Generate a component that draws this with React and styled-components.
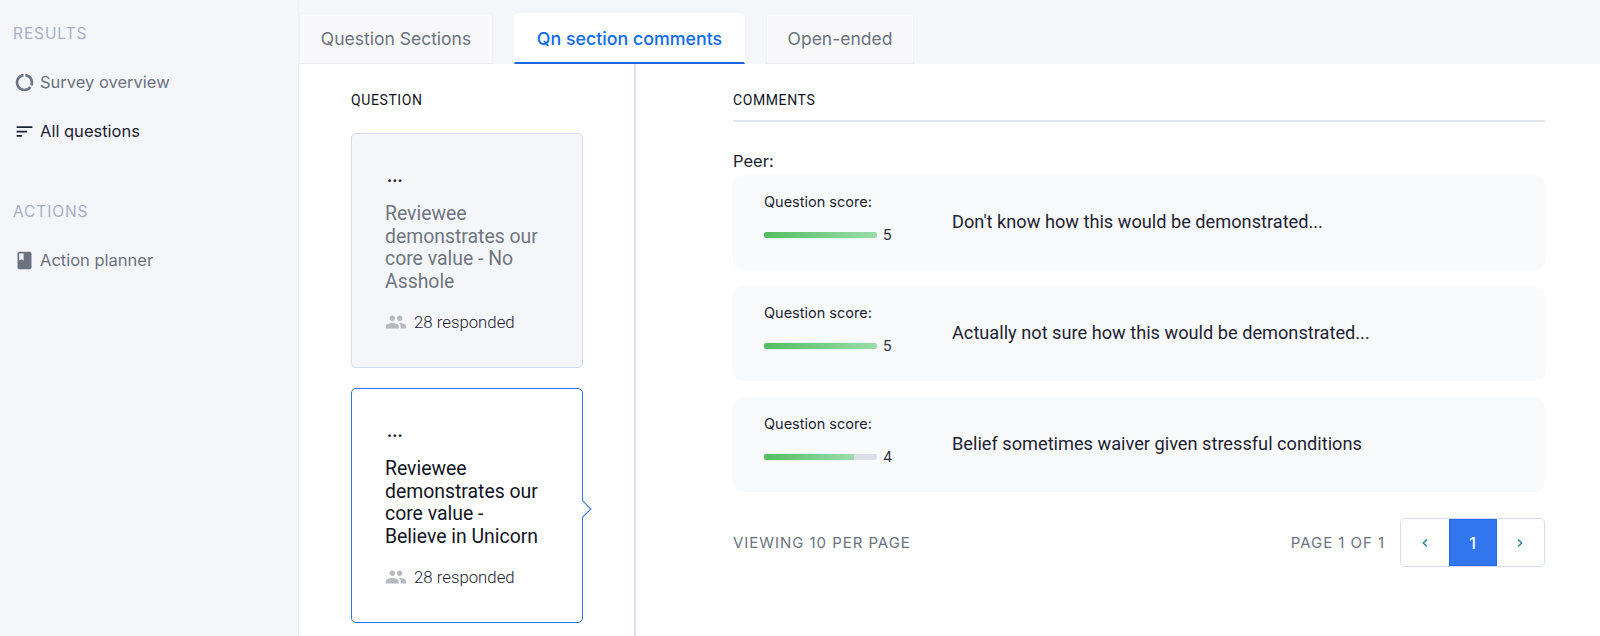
import React from 'react';
import styled, { createGlobalStyle } from 'styled-components';
import { MdDataUsage, MdSort, MdBook, MdPeople, MdChevronLeft, MdChevronRight } from 'react-icons/md';

const GlobalStyle = createGlobalStyle`
  html, body {
    margin: 0;
    padding: 0;
    height: 636px;
    overflow: hidden;
    background: #f5f6fa;
    font-family: Inter, 'Liberation Sans', sans-serif;
  }
`;

const Page = styled.div`
  display: flex;
  width: 1600px;
  height: 636px;
  overflow: hidden;
`;

const Sidebar = styled.aside`
  width: 299px;
  flex: none;
  padding-top: 24px;
  box-sizing: border-box;
  border-right: 1px solid #eff0f4;
`;

const SideHeading = styled.div`
  margin: ${({ $top }) => $top || 0}px 0 0 13px;
  height: 18px;
  line-height: 19px;
  font-size: 15.5px;
  letter-spacing: 0.9px;
  color: #a9b0ca;
`;

const SideItem = styled.div`
  display: flex;
  align-items: center;
  height: 24px;
  margin: ${({ $top }) => $top}px 0 0 13.5px;
  gap: 5.5px;
  font-size: 16.5px;
  color: ${({ $active }) => ($active ? '#1d2233' : '#6b7280')};
  svg {
    width: 21px;
    height: 21px;
    flex: none;
  }
`;

const Main = styled.main`
  flex: 1;
  display: flex;
  flex-direction: column;
  min-width: 0;
`;

const TabBar = styled.div`
  display: flex;
  gap: 21px;
  height: 64px;
  padding-top: 13px;
  box-sizing: border-box;
`;

const Tab = styled.div`
  width: ${({ $w }) => $w}px;
  height: 51px;
  box-sizing: border-box;
  display: flex;
  align-items: center;
  justify-content: center;
  border-radius: 5px 5px 0 0;
  font-size: ${({ $active }) => ($active ? 17.8 : 17.5)}px;
  font-weight: ${({ $active }) => ($active ? 500 : 400)};
  color: ${({ $active }) => ($active ? '#0f6be8' : '#6b7280')};
  background: ${({ $active }) => ($active ? '#fff' : '#f9f9fb')};
  border: 1px solid ${({ $active }) => ($active ? '#fff' : '#f1f2f5')};
  border-bottom: ${({ $active }) => ($active ? '2px solid #1a66e0' : '1px solid #eceef3')};
`;

const Content = styled.div`
  flex: 1;
  display: flex;
  background: #fff;
  min-height: 0;
`;

const QuestionColumn = styled.section`
  width: 337px;
  flex: none;
  box-sizing: border-box;
  padding: 28px 0 0 52px;
  border-right: 2px solid #dbe0f4;
`;

const ColumnHeading = styled.div`
  height: 16px;
  line-height: 16px;
  font-family: Roboto, sans-serif;
  font-size: 14px;
  letter-spacing: 0.6px;
  color: #11141f;
`;

const Card = styled.div`
  position: relative;
  width: 232px;
  height: 235px;
  box-sizing: border-box;
  margin-top: ${({ $top }) => $top}px;
  padding: 33px 0 0 33px;
  border-radius: 5px;
  font-family: Roboto, sans-serif;
  background: ${({ $selected }) => ($selected ? '#fff' : '#f5f6fa')};
  border: 1px solid ${({ $selected }) => ($selected ? '#2f74ec' : '#d3daf3')};
  ${({ $selected }) =>
    $selected &&
    `&::after {
      content: '';
      position: absolute;
      right: -7px;
      top: 114px;
      width: 12px;
      height: 12px;
      box-sizing: border-box;
      background: #fff;
      border-top: 1px solid #2f74ec;
      border-right: 1px solid #2f74ec;
      transform: rotate(45deg);
    }`}
`;

const Dots = styled.div`
  height: 22px;
  margin-left: 2px;
  line-height: 17px;
  font-size: 18px;
  font-weight: 700;
  color: #1d2233;
`;

const CardTitle = styled.div`
  margin-top: 14px;
  width: 162px;
  height: 90px;
  font-size: 19.4px;
  line-height: 22.5px;
  color: ${({ $selected }) => ($selected ? '#11141f' : '#6f7682')};
`;

const Responded = styled.div`
  display: flex;
  align-items: center;
  gap: 7px;
  margin-top: 18px;
  font-size: 16.8px;
  font-weight: 300;
  color: #1d2233;
  svg {
    width: 22px;
    height: 22px;
    color: #b7b9bd;
    flex: none;
  }
`;

const CommentsColumn = styled.section`
  flex: 1;
  min-width: 0;
  padding: 28px 0 0 97px;
`;

const CommentsInner = styled.div`
  width: 812px;
`;

const HeadingLine = styled.div`
  padding-bottom: 12px;
  border-bottom: 2px solid #e3e5ef;
`;

const GroupLabel = styled.div`
  margin-top: 27px;
  height: 24px;
  line-height: 24px;
  font-size: 16.5px;
  color: #1d2233;
`;

const CommentList = styled.div`
  display: flex;
  flex-direction: column;
  gap: 16.5px;
  margin-top: 2px;
`;

const CommentRow = styled.div`
  display: flex;
  height: 94.5px;
  box-sizing: border-box;
  padding: 18px 0 0 31px;
  border-radius: 10px;
  background: #f9fafc;
`;

const ScoreBlock = styled.div`
  width: 188px;
  flex: none;
`;

const ScoreLabel = styled.div`
  height: 18px;
  line-height: 18px;
  font-size: 14.5px;
  color: #1d2233;
`;

const ScoreLine = styled.div`
  display: flex;
  align-items: center;
  gap: 6px;
  margin-top: 15px;
  font-size: 14.5px;
  line-height: 18px;
  color: #2b3040;
`;

const Track = styled.div`
  width: 113px;
  height: 6px;
  border-radius: 2px;
  background: #dcdee8;
  overflow: hidden;
`;

const Fill = styled.div`
  height: 100%;
  background: linear-gradient(90deg, #53bd60, #9bdcab);
`;

const CommentText = styled.div`
  margin-top: 17px;
  font-family: Roboto, sans-serif;
  font-size: 18.2px;
  line-height: 24px;
  color: #1d2233;
`;

const Footer = styled.div`
  display: flex;
  align-items: center;
  justify-content: space-between;
  margin-top: 26.5px;
  font-size: 15px;
  letter-spacing: 0.95px;
  color: #6b7280;
`;

const PageControls = styled.div`
  display: flex;
  align-items: center;
  gap: 15px;
`;

const Pager = styled.div`
  display: flex;
  width: 145px;
  height: 49px;
  box-sizing: border-box;
  border: 1px solid #d3daf3;
  border-radius: 5px;
  overflow: hidden;
`;

const PagerButton = styled.div`
  flex: ${({ $active }) => ($active ? '0 0 48px' : '1')};
  display: flex;
  align-items: center;
  justify-content: center;
  box-sizing: border-box;
  font-size: 16px;
  font-weight: 500;
  letter-spacing: 0;
  color: ${({ $active }) => ($active ? '#fff' : '#1f7f9c')};
  background: ${({ $active }) => ($active ? '#3176ee' : '#fff')};
  border: ${({ $active }) => ($active ? '1px solid #1f6bea' : 'none')};
  svg {
    width: 16px;
    height: 16px;
  }
`;

const comments = [
  { score: 5, text: "Don't know how this would be demonstrated..." },
  { score: 5, text: 'Actually not sure how this would be demonstrated...' },
  { score: 4, text: 'Belief sometimes waiver given stressful conditions' },
];

function QuestionCard({ selected, title, top }) {
  return (
    <Card $selected={selected} $top={top}>
      <Dots>...</Dots>
      <CardTitle $selected={selected}>{title}</CardTitle>
      <Responded>
        <MdPeople />
        28 responded
      </Responded>
    </Card>
  );
}

export default function App() {
  return (
    <>
      <GlobalStyle />
      <Page>
        <Sidebar>
          <SideHeading>RESULTS</SideHeading>
          <SideItem $top={28}>
            <MdDataUsage />
            Survey overview
          </SideItem>
          <SideItem $top={25} $active>
            <MdSort />
            All questions
          </SideItem>
          <SideHeading $top={59}>ACTIONS</SideHeading>
          <SideItem $top={28}>
            <MdBook />
            Action planner
          </SideItem>
        </Sidebar>
        <Main>
          <TabBar>
            <Tab $w={194}>Question Sections</Tab>
            <Tab $w={231} $active>Qn section comments</Tab>
            <Tab $w={148}>Open-ended</Tab>
          </TabBar>
          <Content>
            <QuestionColumn>
              <ColumnHeading>QUESTION</ColumnHeading>
              <QuestionCard top={25} title='Reviewee demonstrates our core value - No Asshole' />
              <QuestionCard top={20} selected title='Reviewee demonstrates our core value - Believe in Unicorn' />
            </QuestionColumn>
            <CommentsColumn>
              <CommentsInner>
                <HeadingLine>
                  <ColumnHeading>COMMENTS</ColumnHeading>
                </HeadingLine>
                <GroupLabel>Peer:</GroupLabel>
                <CommentList>
                  {comments.map((c) => (
                    <CommentRow key={c.text}>
                      <ScoreBlock>
                        <ScoreLabel>Question score:</ScoreLabel>
                        <ScoreLine>
                          <Track>
                            <Fill style={{ width: `${c.score * 20}%` }} />
                          </Track>
                          {c.score}
                        </ScoreLine>
                      </ScoreBlock>
                      <CommentText>{c.text}</CommentText>
                    </CommentRow>
                  ))}
                </CommentList>
                <Footer>
                  <span>VIEWING 10 PER PAGE</span>
                  <PageControls>
                    <span>PAGE 1 OF 1</span>
                    <Pager>
                      <PagerButton><MdChevronLeft /></PagerButton>
                      <PagerButton $active>1</PagerButton>
                      <PagerButton><MdChevronRight /></PagerButton>
                    </Pager>
                  </PageControls>
                </Footer>
              </CommentsInner>
            </CommentsColumn>
          </Content>
        </Main>
      </Page>
    </>
  );
}
